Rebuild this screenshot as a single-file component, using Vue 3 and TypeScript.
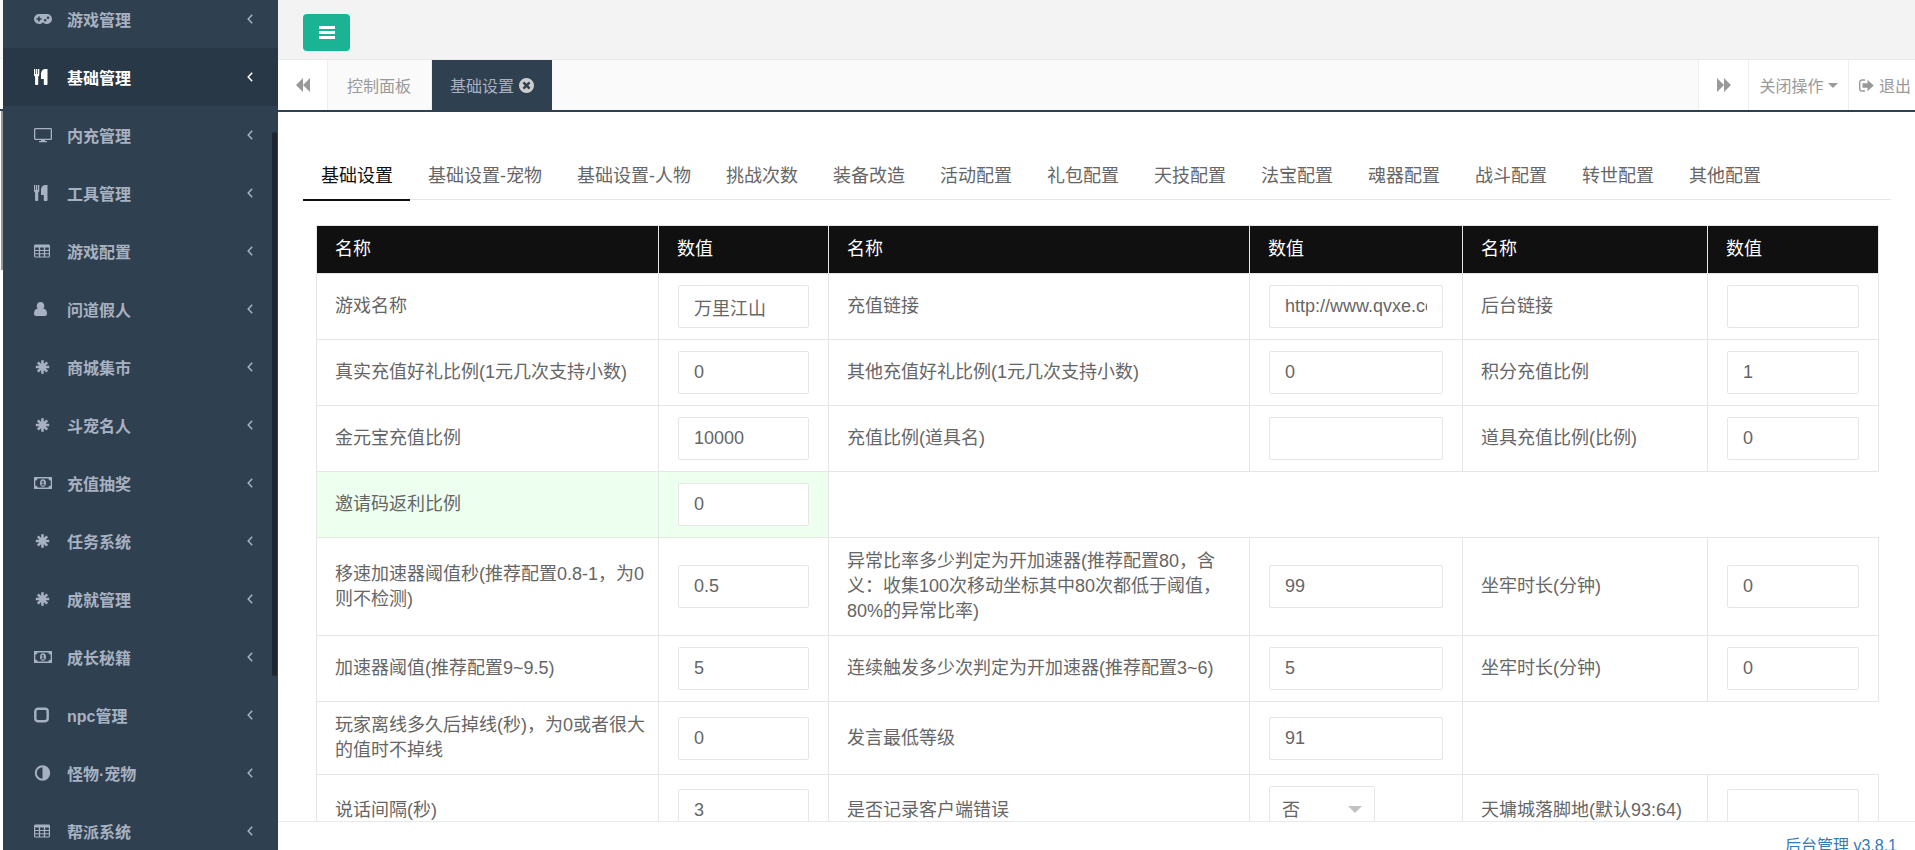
<script setup lang="ts">
import { ref } from 'vue'

interface NavItem {
  icon: string
  label: string
}

interface Field {
  id: string
  label: string
  value: string
  kind?: 'text' | 'select'
}

interface FieldRow {
  highlight?: boolean
  fields: Field[]
}

const navItems: NavItem[] = [
  { icon: 'gamepad', label: '游戏管理' },
  { icon: 'cutlery', label: '基础管理' },
  { icon: 'desktop', label: '内充管理' },
  { icon: 'cutlery', label: '工具管理' },
  { icon: 'table', label: '游戏配置' },
  { icon: 'user', label: '问道假人' },
  { icon: 'asterisk', label: '商城集市' },
  { icon: 'asterisk', label: '斗宠名人' },
  { icon: 'money', label: '充值抽奖' },
  { icon: 'asterisk', label: '任务系统' },
  { icon: 'asterisk', label: '成就管理' },
  { icon: 'money', label: '成长秘籍' },
  { icon: 'square', label: 'npc管理' },
  { icon: 'adjust', label: '怪物·宠物' },
  { icon: 'table', label: '帮派系统' },
]
const activeNav = ref(1)

const tabs: string[] = [
  '基础设置', '基础设置-宠物', '基础设置-人物', '挑战次数', '装备改造', '活动配置', '礼包配置',
  '天技配置', '法宝配置', '魂器配置', '战斗配置', '转世配置', '其他配置',
]
const activeTab = ref(0)

const rows = ref<FieldRow[]>([
  {
    fields: [
      { id: 'game-name', label: '游戏名称', value: '万里江山' },
      { id: 'pay-url', label: '充值链接', value: 'http://www.qvxe.com' },
      { id: 'admin-url', label: '后台链接', value: '' },
    ],
  },
  {
    fields: [
      { id: 'real-gift', label: '真实充值好礼比例(1元几次支持小数)', value: '0' },
      { id: 'other-gift', label: '其他充值好礼比例(1元几次支持小数)', value: '0' },
      { id: 'points-rate', label: '积分充值比例', value: '1' },
    ],
  },
  {
    fields: [
      { id: 'gold-rate', label: '金元宝充值比例', value: '10000' },
      { id: 'item-name', label: '充值比例(道具名)', value: '' },
      { id: 'item-rate', label: '道具充值比例(比例)', value: '0' },
    ],
  },
  {
    highlight: true,
    fields: [{ id: 'invite-rate', label: '邀请码返利比例', value: '0' }],
  },
  {
    fields: [
      { id: 'speed-seconds', label: '移速加速器阈值秒(推荐配置0.8-1，为0则不检测)', value: '0.5' },
      { id: 'abnormal-rate', label: '异常比率多少判定为开加速器(推荐配置80，含义：收集100次移动坐标其中80次都低于阈值，80%的异常比率)', value: '99' },
      { id: 'jail-speed', label: '坐牢时长(分钟)', value: '0' },
    ],
  },
  {
    fields: [
      { id: 'boost-limit', label: '加速器阈值(推荐配置9~9.5)', value: '5' },
      { id: 'boost-count', label: '连续触发多少次判定为开加速器(推荐配置3~6)', value: '5' },
      { id: 'jail-boost', label: '坐牢时长(分钟)', value: '0' },
    ],
  },
  {
    fields: [
      { id: 'offline-seconds', label: '玩家离线多久后掉线(秒)，为0或者很大的值时不掉线', value: '0' },
      { id: 'chat-level', label: '发言最低等级', value: '91' },
    ],
  },
  {
    fields: [
      { id: 'chat-interval', label: '说话间隔(秒)', value: '3' },
      { id: 'log-errors', label: '是否记录客户端错误', value: '否', kind: 'select' },
      { id: 'city-pos', label: '天墉城落脚地(默认93:64)', value: '' },
    ],
  },
])
</script>

<template>
  <div class="app">
    <div class="edge" aria-hidden="true">
      <div class="edge-head"></div>
      <div class="edge-tabs"></div>
      <div class="edge-bar"></div>
    </div>

    <nav class="sidebar">
      <ul class="nav-list">
        <li v-for="(item, i) in navItems" :key="item.label" :class="{ active: i === activeNav }">
          <a href="#" @click.prevent="activeNav = i">
            <svg class="nav-icon" viewBox="0 0 18 16" fill="currentColor" aria-hidden="true">
              <path
                v-if="item.icon === 'gamepad'"
                fill-rule="evenodd"
                d="M5 3h8a5 5 0 0 1 0 10c-1.500 0-2.800-.6-3.600-1.600h-.8C7.800 12.400 6.500 13 5 13A5 5 0 0 1 5 3zM4.200 5.400v1.800H2.400v1.600h1.800v1.800h1.600V8.800h1.800V7.200H5.800V5.400zM11.200 8a1.300 1.300 0 1 0 0 2.600 1.300 1.300 0 0 0 0-2.600zM14 5.400A1.300 1.300 0 1 0 14 8a1.300 1.300 0 0 0 0-2.600z"
              />
              <path
                v-else-if="item.icon === 'cutlery'"
                d="M0 0h1.200v5h.7V0h1.400v5H4V0h1.300v5.500c0 1-.4 1.700-1.100 2V15c0 .6-.5 1-1.100 1h-.9c-.6 0-1.100-.4-1.100-1V7.500C.4 7.200 0 6.500 0 5.500zM13.500 0v15c0 .6-.5 1-1.200 1h-1.300c-.7 0-1.200-.4-1.200-1v-5H7V4.500C7 2 9 0 11.500 0z"
              />
              <path
                v-else-if="item.icon === 'desktop'"
                fill-rule="evenodd"
                d="M1.500 1h15c.8 0 1.500.7 1.500 1.500v9c0 .8-.7 1.500-1.500 1.500H11v1h2v1.300H5V14h2v-1H1.500C.7 13 0 12.300 0 11.500v-9C0 1.700.7 1 1.500 1zM1.300 2.500v9c0 .2.100.3.3.3h14.800c.2 0 .3-.1.3-.3v-9c0-.2-.1-.3-.3-.3H1.600c-.2 0-.3.1-.3.300z"
              />
              <path
                v-else-if="item.icon === 'table'"
                fill-rule="evenodd"
                d="M1.500 1.500h13c.9 0 1.500.6 1.500 1.500v10c0 .9-.6 1.500-1.500 1.500h-13C.6 14.500 0 13.900 0 13V3c0-.9.6-1.500 1.500-1.500zM1.200 4.500V7h3.600V4.500zM6.100 4.500V7h3.700V4.500zM11.200 4.500V7h3.600V4.500zM1.200 8v2.200h3.600V8zM6.100 8v2.200h3.700V8zM11.200 8v2.200h3.600V8zM1.200 11.300v2.200h3.600v-2.200zM6.100 11.300v2.200h3.700v-2.200zM11.200 11.300v2.200h3.600v-2.200z"
              />
              <path
                v-else-if="item.icon === 'user'"
                d="M6.500 1a3.800 3.800 0 0 1 2.600 6.600c2.600.2 3.900 2.300 3.900 5.200 0 1.400-.9 2.200-2.100 2.200H2.100C.9 15 0 14.200 0 12.800c0-2.900 1.300-5 3.900-5.200A3.800 3.800 0 0 1 6.500 1z"
              />
              <path
                v-else-if="item.icon === 'asterisk'"
                d="M8.500 1.200v13.600M1.800 8h13.400M3.800 3.300l9.400 9.400M13.200 3.300l-9.400 9.400"
                stroke="currentColor"
                stroke-width="2.600"
              />
              <path
                v-else-if="item.icon === 'money'"
                fill-rule="evenodd"
                d="M0 2h18v12H0zM3.600 3.400A2.300 2.300 0 0 1 1.300 5.600v4.800a2.300 2.300 0 0 1 2.300 2.200h10.800a2.300 2.300 0 0 1 2.300-2.200V5.600a2.300 2.300 0 0 1-2.300-2.200zM9 4.200c1.900 0 3 1.700 3 3.800s-1.100 3.800-3 3.800S6 10.100 6 8s1.100-3.800 3-3.800zM8.700 5.700 7.300 6.900l.6.7.5-.4v2.200h-1v1h3.200v-1h-1V5.700z"
              />
              <rect
                v-else-if="item.icon === 'square'"
                x="1.300"
                y="1.800"
                width="12.400"
                height="12.400"
                rx="2.600"
                fill="none"
                stroke="currentColor"
                stroke-width="2.400"
              />
              <path
                v-else
                fill-rule="evenodd"
                d="M8.500.3a7.700 7.700 0 1 1 0 15.400 7.700 7.700 0 0 1 0-15.400zM8.500 2.300a5.700 5.700 0 0 0 0 11.400z"
              />
            </svg>
            <span class="nav-label">{{ item.label }}</span>
            <svg class="nav-arrow" viewBox="0 0 6 10" aria-hidden="true">
              <path d="M5.200.8 1.200 5l4 4.200" fill="none" stroke="currentColor" stroke-width="1.500" />
            </svg>
          </a>
        </li>
      </ul>
      <div class="nav-thumb" aria-hidden="true"></div>
    </nav>

    <div class="main">
      <header class="topbar">
        <button class="menu-btn" type="button" aria-label="菜单">
          <svg viewBox="0 0 16 14" aria-hidden="true">
            <path d="M0 0h16v3H0zM0 5h16v3H0zM0 10h16v3H0z" fill="currentColor" />
          </svg>
        </button>
      </header>

      <div class="pagebar">
        <button class="roll roll-left" type="button" aria-label="向左">
          <svg viewBox="0 0 14 14" fill="currentColor" aria-hidden="true">
            <path d="M7 0v14L0 7zM14 0v14L7 7z" />
          </svg>
        </button>
        <a class="page" href="#">控制面板</a>
        <a class="page current" href="#">
          <span>基础设置</span>
          <svg viewBox="128 128 1536 1536" fill="currentColor" aria-hidden="true">
            <path
              d="M1277 1122q0-26-19-45l-181-181 181-181q19-19 19-45 0-27-19-46l-90-90q-19-19-46-19-26 0-45 19l-181 181-181-181q-19-19-45-19-27 0-46 19l-90 90q-19 19-19 46 0 26 19 45l181 181-181 181q-19 19-19 45 0 27 19 46l90 90q19 19 46 19 26 0 45-19l181-181 181 181q19 19 45 19 27 0 46-19l90-90q19-19 19-46zm387-226q0 209-103 385.500t-279.500 279.500-385.500 103-385.500-103-279.500-279.500-103-385.500 103-385.500 279.500-279.500 385.500-103 385.500 103 279.500 279.500 103 385.500z"
            />
          </svg>
        </a>
        <div class="spacer"></div>
        <button class="roll roll-right" type="button" aria-label="向右">
          <svg viewBox="0 0 14 14" fill="currentColor" aria-hidden="true">
            <path d="M0 0v14l7-7zM7 0v14l7-7z" />
          </svg>
        </button>
        <button class="close-menu" type="button">
          <span>关闭操作</span>
          <svg viewBox="0 0 10 5" aria-hidden="true"><path d="M0 0h10L5 5z" fill="currentColor" /></svg>
        </button>
        <a class="logout" href="#">
          <svg viewBox="0 0 15 13" aria-hidden="true">
            <path d="M6 1H3a2.300 2.300 0 0 0-2.300 2.300v6.400A2.300 2.300 0 0 0 3 12h3" fill="none" stroke="currentColor" stroke-width="1.400" />
            <path d="M3.500 4.200h5V.8L14.700 6.500l-6.200 5.700V8.800h-5z" fill="currentColor" />
          </svg>
          <span>退出</span>
        </a>
      </div>

      <main class="content">
        <div class="tabs" role="tablist">
          <button
            v-for="(tab, i) in tabs"
            :key="tab"
            class="tab"
            :class="{ selected: i === activeTab }"
            type="button"
            role="tab"
            :aria-selected="i === activeTab"
            @click="activeTab = i"
          >{{ tab }}</button>
        </div>

        <div class="table-wrap">
          <table class="grid">
            <colgroup>
              <col class="c1" /><col class="c2" /><col class="c3" />
              <col class="c4" /><col class="c5" /><col class="c6" />
            </colgroup>
            <thead>
              <tr>
                <template v-for="n in 3" :key="n">
                  <th scope="col">名称</th>
                  <th scope="col">数值</th>
                </template>
              </tr>
            </thead>
            <tbody>
              <tr v-for="(row, r) in rows" :key="r" :class="{ highlight: row.highlight }">
                <template v-for="field in row.fields" :key="field.id">
                  <td class="name"><label :for="field.id">{{ field.label }}</label></td>
                  <td class="value">
                    <div v-if="field.kind === 'select'" class="select-box">
                      <select :id="field.id" v-model="field.value">
                        <option>否</option>
                        <option>是</option>
                      </select>
                      <svg viewBox="0 0 14 7" aria-hidden="true"><path d="M0 0h14L7 7z" fill="currentColor" /></svg>
                    </div>
                    <input v-else :id="field.id" v-model="field.value" type="text" autocomplete="off" />
                  </td>
                </template>
              </tr>
            </tbody>
          </table>
        </div>
      </main>

      <footer class="footer"><a href="#">后台管理 v3.8.1</a></footer>
    </div>
  </div>
</template>

<style>
body {
  background: #fff;
  overflow: hidden;
}
</style>

<style scoped>
* {
  box-sizing: border-box;
}

.app {
  display: flex;
  height: 100vh;
  overflow: hidden;
  font-family: "Liberation Sans", "Noto Sans CJK SC", sans-serif;
  font-size: 16px;
  color: #666;
}

a {
  color: inherit;
  text-decoration: none;
}

button {
  font: inherit;
  color: inherit;
  border: 0;
  padding: 0;
  cursor: pointer;
}

svg {
  display: block;
  flex: none;
}

.edge {
  width: 3px;
  flex: none;
}

.edge-head {
  height: 59px;
  background: #f9f9f9;
  border-bottom: 1px solid #e7eaec;
}

.edge-tabs {
  height: 52px;
  border-bottom: 2px solid #2f4050;
}

.edge-bar {
  height: 159px;
  margin-left: 1px;
  background: #999;
}

.sidebar {
  position: relative;
  width: 275px;
  flex: none;
  overflow: hidden;
  background: #2f4050;
  color: #a7b1c2;
  font-weight: 600;
}

.nav-list {
  list-style: none;
  margin: -10px 0 0;
  padding: 0;
}

.nav-list a {
  display: flex;
  align-items: center;
  height: 58px;
  padding: 0 25px 0 31px;
}

.nav-list .active {
  background: #293846;
  color: #fff;
}

.nav-icon {
  width: 18px;
  height: 16px;
  margin-right: 15px;
}

.nav-label {
  flex: 1;
}

.nav-arrow {
  width: 6px;
  height: 10px;
}

.nav-thumb {
  position: absolute;
  top: 132px;
  right: 1px;
  width: 5px;
  height: 544px;
  border-radius: 3px;
  background: #1c2630;
}

.main {
  display: flex;
  flex: 1;
  flex-direction: column;
  min-width: 0;
}

.topbar {
  flex: none;
  height: 60px;
  padding: 14px 25px 0;
  background: #f3f3f4;
  border-bottom: 1px solid #e7eaec;
}

.menu-btn {
  display: flex;
  align-items: center;
  justify-content: center;
  width: 47px;
  height: 37px;
  border-radius: 4px;
  background: #1ab394;
  color: #fff;
}

.menu-btn svg {
  width: 16px;
  height: 14px;
}

.pagebar {
  display: flex;
  flex: none;
  height: 52px;
  border-bottom: 2px solid #2f4050;
  background: #fafafa;
  color: #999;
}

.pagebar > * {
  display: flex;
  align-items: center;
}

.roll {
  justify-content: center;
  width: 50px;
  background: #fff;
}

.roll svg {
  width: 14px;
  height: 14px;
}

.roll-left {
  border-right: 1px solid #eee;
}

.page {
  padding: 0 20px 0 19px;
  border-right: 1px solid #eee;
}

.page.current {
  gap: 5px;
  padding: 0 18px;
  border-right: 0;
  background: #2f4050;
  color: #a7b1c2;
}

.page.current svg {
  width: 15px;
  height: 15px;
  color: #ccc;
}

.spacer {
  flex: 1;
}

.roll-right,
.close-menu,
.logout {
  border-left: 1px solid #eee;
  background: #fff;
}

.close-menu {
  gap: 4px;
  justify-content: center;
  width: 100px;
}

.close-menu svg {
  width: 10px;
  height: 5px;
}

.logout {
  gap: 5px;
  width: 67px;
  padding-left: 10px;
  white-space: nowrap;
}

.logout svg {
  width: 15px;
  height: 13px;
}

.content {
  flex: 1;
  min-height: 0;
  padding: 38px 24px 0 25px;
  overflow: hidden;
  font-size: 18px;
}

.tabs {
  display: flex;
  height: 50px;
  border-bottom: 1px solid #e6e6e6;
}

.tab {
  flex: none;
  height: 51px;
  padding: 0 17px 2px 18px;
  border-bottom: 2px solid transparent;
  background: none;
  white-space: nowrap;
}

.tab.selected {
  border-bottom-color: #101010;
  color: #101010;
}

.table-wrap {
  padding: 25px 12px 0 13px;
}

.grid {
  width: 100%;
  table-layout: fixed;
  border-collapse: collapse;
  line-height: 25px;
}

.c1 { width: 342px; }
.c2 { width: 170px; }
.c3 { width: 421px; }
.c4 { width: 213px; }
.c5 { width: 245px; }
.c6 { width: 171px; }

th,
td {
  padding: 11px 19px;
  border: 1px solid #e6e6e6;
  text-align: left;
  vertical-align: middle;
}

th {
  padding-left: 18px;
  background: #101010;
  color: #fff;
  font-weight: 400;
}

td.name {
  padding-right: 8px;
  padding-left: 18px;
}

.highlight td {
  background: #edffef;
}

input,
select {
  display: block;
  width: 100%;
  height: 43px;
  margin: 0;
  padding: 0 15px;
  border: 1px solid #e6e6e6;
  border-radius: 2px;
  background: #fff;
  color: #666;
  font: inherit;
  outline: 0;
}

.select-box {
  position: relative;
  width: 106px;
}

select {
  height: 48px;
  padding: 0 12px;
  appearance: none;
}

.select-box svg {
  position: absolute;
  top: 20px;
  right: 13px;
  width: 14px;
  height: 7px;
  color: #c2c2c2;
  pointer-events: none;
}

.footer {
  flex: none;
  height: 29px;
  padding: 12px 18px 0;
  overflow: hidden;
  border-top: 1px solid #e7eaec;
  text-align: right;
  line-height: 24px;
  color: #337ab7;
}
</style>
